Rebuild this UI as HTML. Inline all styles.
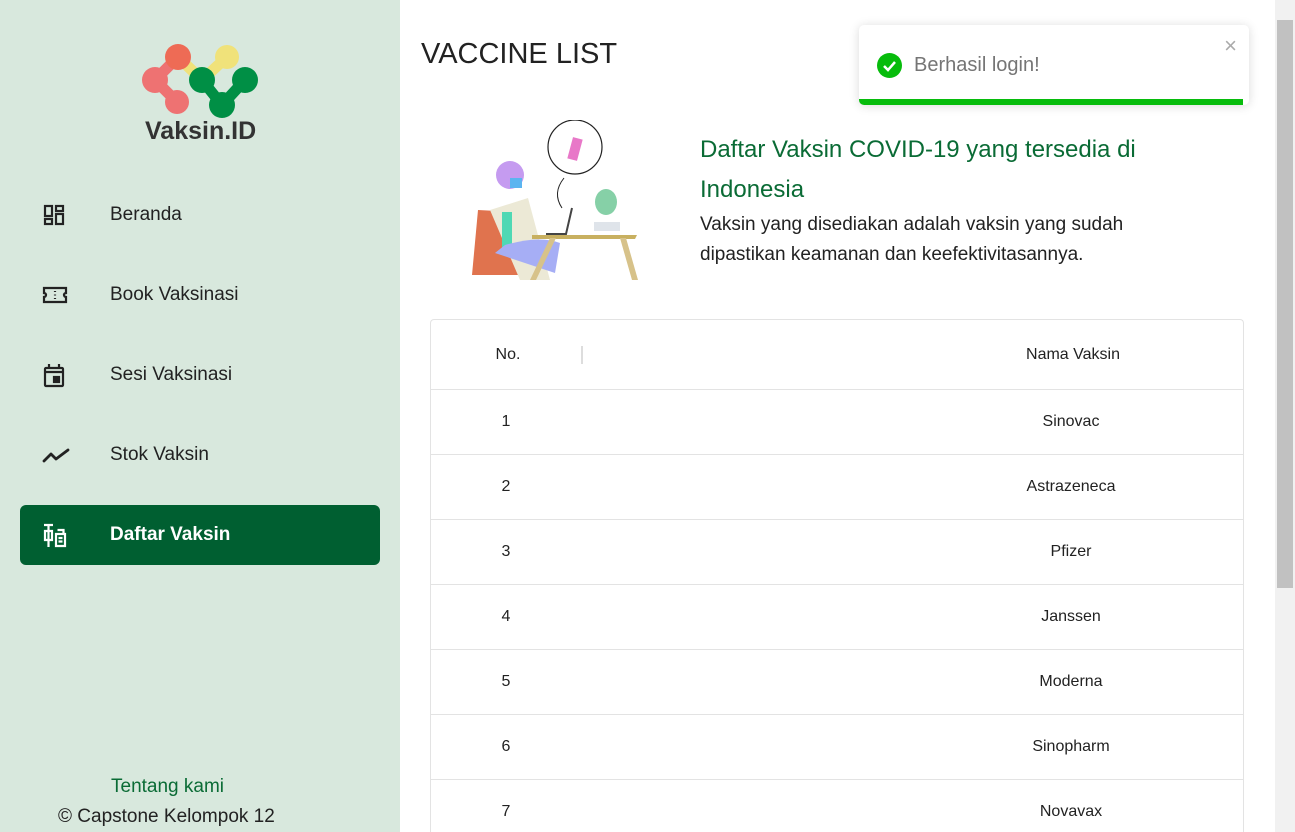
<!DOCTYPE html>
<html><head><meta charset="utf-8"><style>
*{box-sizing:border-box;margin:0;padding:0}
html,body{width:1295px;height:832px;overflow:hidden}
body{font-family:"Liberation Sans",sans-serif;background:#fff;position:relative;color:#222}
.side{position:absolute;left:0;top:0;width:400px;height:832px;background:#d8e8dd}
.nav{position:absolute;left:20px;width:360px;height:60px;font-size:19px;color:#222}
.nav svg{position:absolute;left:22px;top:18px}
.nav span{position:absolute;left:90px;top:19px}
.nav.act{background:#005f31;color:#fff;border-radius:6px;font-weight:bold}
.main{position:absolute;left:400px;top:0;width:875px;height:832px;overflow:hidden}
h1{position:absolute;left:21px;top:38px;font-weight:normal;font-size:29px;color:#222}
.tbl{position:absolute;left:30px;top:319px;width:814px;height:513px;border:1px solid #e3e3e3;border-bottom:none;border-radius:4px 4px 0 0;overflow:hidden}
.row{position:absolute;left:0;width:812px;border-top:1px solid #e3e3e3;height:65px;font-size:16px}
.row .a{position:absolute;left:60px;width:30px;text-align:center;top:23px}
.row .b{position:absolute;left:540px;width:200px;text-align:center;top:23px}
.scroll{position:absolute;left:1275px;top:0;width:20px;height:832px;background:#f1f1f1}
.thumb{position:absolute;left:2px;top:20px;width:16px;height:568px;background:#c1c1c1}
.toast{position:absolute;left:859px;top:25px;width:390px;height:80px;background:#fff;border-radius:5px;box-shadow:0 1px 10px rgba(0,0,0,.15);overflow:hidden}
</style></head><body>
<div class="side">
<svg style="position:absolute;left:130px;top:40px" width="140" height="80" viewBox="0 0 140 80">
<g stroke-linecap="round" fill="none" stroke-width="11">
<path d="M48 17 L72 40 L97 17" stroke="#f0e27a"/>
<path d="M48 17 L25 40 L47 62" stroke="#ee7272"/>
<path d="M72 40 L92 65 L115 40" stroke="#008f45"/>
</g>
<circle cx="25" cy="40" r="13" fill="#ee7272"/>
<circle cx="47" cy="62" r="12" fill="#ee7272"/>
<circle cx="48" cy="17" r="13" fill="#ee6b55"/>
<circle cx="97" cy="17" r="12" fill="#f0e27a"/>
<circle cx="72" cy="40" r="13" fill="#008f45"/>
<circle cx="92" cy="65" r="13" fill="#008f45"/>
<circle cx="115" cy="40" r="13" fill="#008f45"/>
</svg>
<div style="position:absolute;left:145px;top:117px;font-size:25px;font-weight:bold;color:#333">Vaksin.ID</div>
<div class="nav" style="top:185px"><svg width="24" height="24" viewBox="0 0 24 24" fill="none" stroke="#222" stroke-width="2.2"><rect x="3" y="3" width="7" height="10"/><rect x="3" y="16" width="7" height="5"/><rect x="14" y="3" width="7" height="5"/><rect x="14" y="11" width="7" height="10"/></svg><span>Beranda</span></div>
<div class="nav" style="top:265px"><svg width="26" height="24" viewBox="0 0 26 24" fill="none" stroke="#222" stroke-width="2.2"><path d="M2 5h22v5a2 2 0 0 0 0 4v5H2v-5a2 2 0 0 0 0-4z"/><path d="M13 8v1M13 11.5v1M13 15v1"/></svg><span>Book Vaksinasi</span></div>
<div class="nav" style="top:345px"><svg width="24" height="26" viewBox="0 0 24 26" fill="none" stroke="#222" stroke-width="2.2"><rect x="3" y="5" width="18" height="18" rx="1"/><path d="M3 9h18M7 1v5M17 1v5"/><rect x="12" y="14" width="5" height="5" fill="#222"/></svg><span>Sesi Vaksinasi</span></div>
<div class="nav" style="top:425px"><svg width="30" height="24" viewBox="0 0 30 24" fill="none" stroke="#222" stroke-width="2.8" stroke-linecap="round" stroke-linejoin="round"><path d="M2 18l7-7 5 5 12-9"/></svg><span>Stok Vaksin</span></div>
<div class="nav act" style="top:505px"><svg width="26" height="26" viewBox="0 0 26 26" fill="none" stroke="#fff" stroke-width="2.2"><path d="M2 2h9M6.5 2v22M3 8h7v9H3zM14 11h9v12h-9zM15.5 7h6v4"/><path d="M16.5 15h4M16.5 18.5h4"/></svg><span>Daftar Vaksin</span></div>
<div style="position:absolute;left:111px;top:776px;font-size:19px;color:#0a6b35">Tentang kami</div>
<div style="position:absolute;left:58px;top:806px;font-size:19px;color:#222">© Capstone Kelompok 12</div>
</div>
<div class="main">
<h1>VACCINE LIST</h1>
<svg style="position:absolute;left:60px;top:120px" width="190" height="162" viewBox="0 0 190 162">
<circle cx="115" cy="27" r="27" fill="#fff" stroke="#222" stroke-width="1.2"/>
<path d="M104 58 q-12 15 -2 30" stroke="#222" fill="none"/>
<rect x="110" y="18" width="10" height="22" fill="#e878c8" transform="rotate(15 115 29)"/>
<path d="M80 155 L12 155 L18 90 L55 92 Z" fill="#e0734e"/>
<path d="M30 90 L68 78 L90 160 L60 160 Z" fill="#ece9d6"/>
<path d="M42 92 h10 v40 h-10z" fill="#4fd8b4"/>
<path d="M45 125 q35 -10 55 -2 l-5 30 l-60 -20z" fill="#a6aef5"/>
<ellipse cx="50" cy="55" rx="14" ry="14" fill="#c59bf0"/>
<rect x="50" y="58" width="12" height="10" fill="#5cb4f0"/>
<path d="M72 115 h105 l-2 4 h-103z" fill="#c8b060"/>
<path d="M90 118 l-20 42 h6 l20 -42zM160 118 l12 42 h6 l-12 -42z" fill="#d7c28a"/>
<path d="M112 88 l-6 26 h-20" stroke="#444" stroke-width="2" fill="none"/>
<ellipse cx="146" cy="82" rx="11" ry="13" fill="#86d0a7"/>
<rect x="134" y="102" width="26" height="9" fill="#dfe4ea"/>
</svg>
<div style="position:absolute;left:300px;top:130px;width:490px;font-size:24px;line-height:40px;color:#0a6b35">Daftar Vaksin COVID-19 yang tersedia di Indonesia</div>
<div style="position:absolute;left:300px;top:210px;width:490px;font-size:19px;line-height:30px;color:#222">Vaksin yang disediakan adalah vaksin yang sudah dipastikan keamanan dan keefektivitasannya.</div>
<div class="tbl">
<div class="row" style="top:0;border-top:none;height:69px"><div class="a" style="left:62px;top:26px;width:30px">No.</div><div style="position:absolute;left:150px;top:26px;width:2px;height:18px;background:#ddd"></div><div class="b" style="top:26px;left:542px">Nama Vaksin</div></div>
<div class="row" style="top:69px"><div class="a">1</div><div class="b">Sinovac</div></div>
<div class="row" style="top:134px"><div class="a">2</div><div class="b">Astrazeneca</div></div>
<div class="row" style="top:199px"><div class="a">3</div><div class="b">Pfizer</div></div>
<div class="row" style="top:264px"><div class="a">4</div><div class="b">Janssen</div></div>
<div class="row" style="top:329px"><div class="a">5</div><div class="b">Moderna</div></div>
<div class="row" style="top:394px"><div class="a">6</div><div class="b">Sinopharm</div></div>
<div class="row" style="top:459px;height:53px"><div class="a">7</div><div class="b">Novavax</div></div>
</div>
</div>
<div class="toast">
<svg style="position:absolute;left:18px;top:28px" width="25" height="25" viewBox="0 0 25 25"><circle cx="12.5" cy="12.5" r="12.5" fill="#07bc0c"/><path d="M7 13l4 4 7-8" stroke="#fff" stroke-width="2.5" fill="none"/></svg>
<div style="position:absolute;left:55px;top:29px;font-size:20px;color:#757575">Berhasil login!</div>
<div style="position:absolute;right:12px;top:8px;font-size:22px;color:#aaa">×</div>
<div style="position:absolute;left:0;bottom:0;width:384px;height:6px;background:#07bc0c"></div>
</div>
<div class="scroll"><div class="thumb"></div></div>
</body></html>
